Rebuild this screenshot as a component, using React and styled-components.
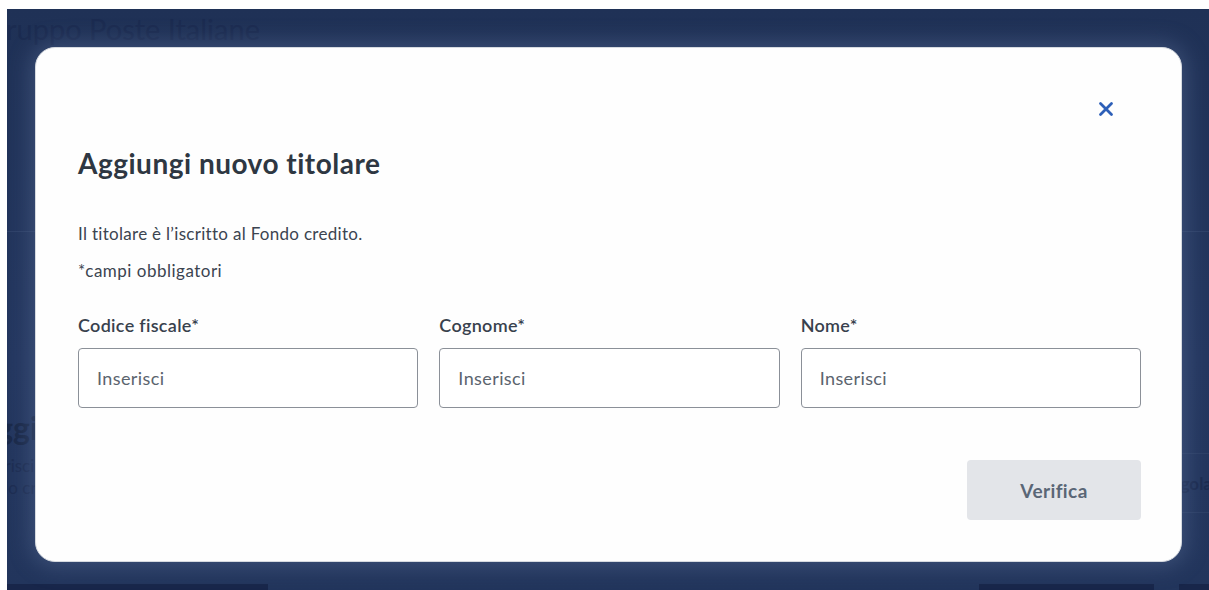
import React from 'react';
import styled, { createGlobalStyle } from 'styled-components';

const GlobalStyle = createGlobalStyle`
  html, body {
    margin: 0;
    padding: 0;
    background: #ffffff;
  }
  body {
    font-family: Lato, "Open Sans", Arial, sans-serif;
  }
`

const fields = [
  { id: 'cf', label: 'Codice fiscale*' },
  { id: 'cognome', label: 'Cognome*' },
  { id: 'nome', label: 'Nome*' },
]

export default function App() {
  return (
    <>
      <GlobalStyle />
      <Screen>
        <Page>
          <PageHeader>Gruppo Poste Italiane</PageHeader>
          <PageIntro />
          <PageBody>
            <PageSection>
              <PageTitle>Aggiungi titolare</PageTitle>
              <PageText>Inserisci i dati del titolare</PageText>
              <PageText>fondo credito</PageText>
            </PageSection>
            <GhostButton>Nuova regola</GhostButton>
          </PageBody>
          <PageFooter>
            <FooterButton $w={261} />
            <FooterButton $w={175} $push />
            <FooterButton $w={30} />
          </PageFooter>
        </Page>

        <Overlay>
          <Modal role="dialog" aria-labelledby="modal-title">
            <CloseRow>
              <CloseButton aria-label="Chiudi">
                <svg width="16" height="16" viewBox="0 0 16 16" fill="none">
                  <path d="M2.5 2.5L13.5 13.5M13.5 2.5L2.5 13.5" stroke="#2d5fb8" strokeWidth="2.8" strokeLinecap="round" />
                </svg>
              </CloseButton>
            </CloseRow>
            <Title id="modal-title">Aggiungi nuovo titolare</Title>
            <Description>Il titolare è l’iscritto al Fondo credito.</Description>
            <Hint>*campi obbligatori</Hint>
            <FieldGrid>
              {fields.map(f => (
                <Field key={f.id}>
                  <Label htmlFor={f.id}>{f.label}</Label>
                  <Input id={f.id} placeholder="Inserisci" />
                </Field>
              ))}
            </FieldGrid>
            <Actions>
              <SubmitButton disabled>Verifica</SubmitButton>
            </Actions>
          </Modal>
        </Overlay>
      </Screen>
    </>
  )
}

const Screen = styled.div`
  position: relative;
  margin: 9px 0 0 7px;
  height: 581px;
  overflow: hidden;
  background: linear-gradient(180deg, #1f3156 0%, #243760 60%, #22355c 100%);
`

/* dimmed page behind the dialog */
const Page = styled.div`
  display: grid;
  grid-template-rows: 45px 178px 1fr 6px;
  height: 100%;
  color: #1a2949;
`

const PageHeader = styled.div`
  margin-left: -22px;
  font-size: 29px;
  line-height: 40px;
  color: #1b2b50;
`

const PageIntro = styled.div`
  border-bottom: 1px solid #2e4168;
`

const PageBody = styled.div`
  display: flex;
  justify-content: space-between;
  align-items: flex-start;
`

const PageSection = styled.div`
  margin: 179px 0 0 -33px;
`

const PageTitle = styled.div`
  font-size: 32px;
  font-weight: 700;
  line-height: 34px;
  color: #1a2949;
`

const PageText = styled.div`
  margin-top: ${p => (p.$first ? '10px' : '0')};
  font-size: 17px;
  line-height: 22px;
  color: #1d2d52;
  &:nth-child(2) {
    margin-top: 10px;
  }
`

const GhostButton = styled.div`
  margin: 221px -40px 0 0;
  width: 200px;
  height: 58px;
  display: flex;
  align-items: center;
  justify-content: flex-end;
  padding-right: 37px;
  border-top: 1px solid #2c3f66;
  border-bottom: 1px solid #2c3f66;
  font-size: 17px;
  font-weight: 700;
  color: #1b2b50;
`

const PageFooter = styled.div`
  display: flex;
  gap: 25px;
`

const FooterButton = styled.div`
  width: ${p => p.$w}px;
  margin-left: ${p => (p.$push ? 'auto' : '0')};
  background: #18264a;
`

const Overlay = styled.div`
  position: absolute;
  inset: 0;
  padding: 38px 27px 28px 28px;
  display: flex;
`

const Modal = styled.div`
  flex: 1;
  display: flex;
  flex-direction: column;
  padding: 53px 40px 42px 42px;
  background: #fefefe;
  border: 1px solid #d6dae0;
  border-radius: 20px;
  box-shadow: 0 0 22px 4px rgba(96, 116, 156, 0.45);
`

const CloseRow = styled.div`
  display: flex;
  justify-content: flex-end;
  padding-right: 27px;
`

const CloseButton = styled.button`
  width: 16px;
  height: 16px;
  padding: 0;
  border: none;
  background: none;
  display: flex;
  cursor: pointer;
`

const Title = styled.h2`
  margin: 29px 0 0;
  font-size: 28px;
  line-height: 34px;
  letter-spacing: 0.5px;
  font-weight: 700;
  color: #2e3742;
`

const Description = styled.p`
  margin: 43px 0 0;
  font-size: 17px;
  line-height: 22px;
  letter-spacing: 0.3px;
  color: #3b4450;
`

const Hint = styled(Description)`
  margin-top: 15px;
  letter-spacing: 0.5px;
`

const FieldGrid = styled.div`
  display: grid;
  grid-template-columns: repeat(3, 1fr);
  gap: 21px;
  margin-top: 32px;
`

const Field = styled.div`
  display: flex;
  flex-direction: column;
  gap: 12px;
`

const Label = styled.label`
  font-size: 18px;
  line-height: 22px;
  letter-spacing: 0.3px;
  font-weight: 600;
  color: #38414d;
`

const Input = styled.input`
  box-sizing: border-box;
  height: 60px;
  padding: 0 18px;
  border: 1px solid #8b9098;
  border-radius: 4px;
  font-family: inherit;
  font-size: 18px;
  letter-spacing: 0.4px;
  color: #333;
  &::placeholder {
    color: #5b646e;
  }
`

const Actions = styled.div`
  display: flex;
  justify-content: flex-end;
  margin-top: 52px;
`

const SubmitButton = styled.button`
  width: 174px;
  height: 60px;
  border: none;
  border-radius: 4px;
  background: #e3e5e9;
  font-family: inherit;
  font-size: 19px;
  font-weight: 700;
  letter-spacing: 0.4px;
  color: #5a6676;
`
